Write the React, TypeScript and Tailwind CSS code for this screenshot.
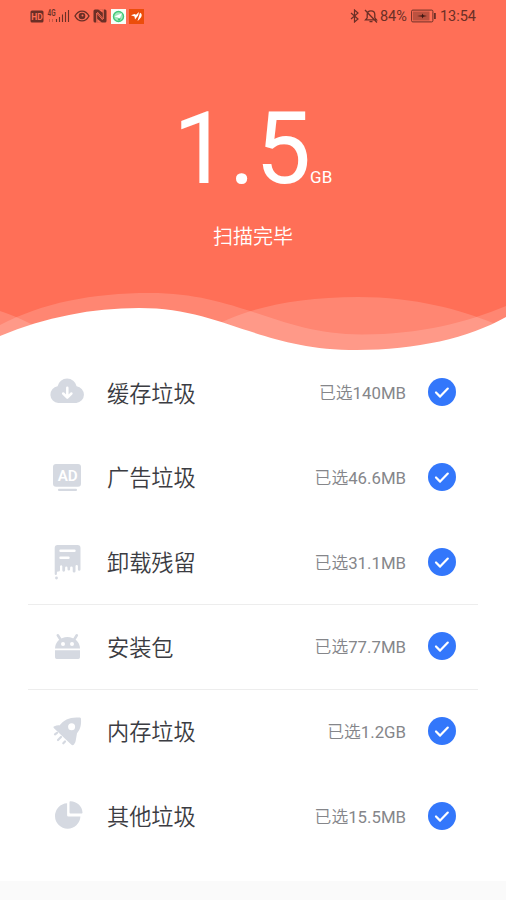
import type { ReactNode } from 'react';

type Row = { name: string; size: string; icon: ReactNode; divider?: boolean };

const CloudIcon = () => (
  <svg className="w-9 h-9" viewBox="0 0 36 36" aria-hidden="true">
    <path d="M9.500 29a8.400 8.400 0 0 1-.7-16.700A9.700 9.700 0 0 1 27.800 12.300 8.400 8.400 0 0 1 27.500 29z" fill="#d5d9e1" transform="translate(-.2 -1)" />
    <path d="M18.300 12.700v9.400M14.200 18.500l4.100 4.100 4.100-4.100" fill="none" stroke="#fff" strokeWidth="2.500" strokeLinecap="round" strokeLinejoin="round" />
  </svg>
);

const AdIcon = () => (
  <svg className="w-9 h-9" viewBox="0 0 36 36" aria-hidden="true">
    <rect x="4" y="4" width="28" height="22.800" rx="3" fill="#d5d9e1" />
    <rect x="9" y="28.700" width="19" height="2.300" rx="1" fill="#d5d9e1" />
    <text x="18.700" y="21" textAnchor="middle" fontSize="15" fontWeight="600" textLength="20" lengthAdjust="spacingAndGlyphs" fill="#fff" fontFamily="Roboto, sans-serif">AD</text>
  </svg>
);

const ResidueIcon = () => (
  <svg className="w-9 h-9" viewBox="0 0 36 36" aria-hidden="true">
    <path d="M8 1h20a3 3 0 0 1 3 3v21.500a1.300 1.300 0 0 1-2.600 0v-3.200a1.200 1.200 0 0 0-2.400 0v4.900a1.400 1.400 0 0 1-2.800 0v-3.500a1.300 1.300 0 0 0-2.600 0v1.600a1.300 1.300 0 0 1-2.600 0v-1.600a1.200 1.200 0 0 0-2.400 0v2.600a1.400 1.400 0 0 1-2.800 0v-4.100a1.200 1.200 0 0 0-2.300 0v3.900a1.500 1.500 0 0 1-1.500 1.500h-.6a1 1 0 0 0-1 1v1.300a1.100 1.100 0 0 1-2.200 0V4a3 3 0 0 1 2.800-3z" fill="#d5d9e1" transform="translate(.5 0)" />
    <circle cx="7.500" cy="34" r="1.400" fill="#d5d9e1" />
    <path d="M11.500 6.700h14M11.500 13.700h8" stroke="#fff" strokeWidth="2.400" strokeLinecap="round" />
  </svg>
);

const PackageIcon = () => (
  <svg className="w-9 h-9" viewBox="0 0 36 36" aria-hidden="true">
    <path d="M8.800 6.300l3.500 5.500M27.800 6.300L24.300 12" stroke="#d5d9e1" strokeWidth="2.600" strokeLinecap="round" />
    <path d="M6 19.500c0-6.500 5.500-11.500 12.400-11.500S31 13 31 19.500z" fill="#d5d9e1" />
    <path d="M6 21.300h25v7a1.700 1.700 0 0 1-1.700 1.700H7.700A1.700 1.700 0 0 1 6 28.300z" fill="#d5d9e1" />
    <circle cx="14" cy="15" r="2" fill="#fff" />
    <circle cx="23" cy="15" r="2" fill="#fff" />
  </svg>
);

const RocketIcon = () => (
  <svg className="w-9 h-9" viewBox="0 0 36 36" aria-hidden="true">
    <path d="M30.500 3.500c.8 0 1.500.6 1.500 1.400.3 5.500-.3 9.800-4 14.300l-1.300 7.600c-.2 1.200-.9 2.700-1.700 3.700-.9 1.100-2 1-2.800 0L5 14.200c-.9-.9-.6-1.600.4-2 1.700-.7 3.400-1 5-.8C15.400 5.500 20.500 2.800 30.500 3.500z" fill="#d5d9e1" />
    <circle cx="22.600" cy="12.800" r="3.500" fill="#fff" />
    <path d="M8 18.800l-2 1.600M12 23l-3 3M16 27.500l-1.700 1.800" stroke="#d5d9e1" strokeWidth="2.200" strokeLinecap="round" />
  </svg>
);

const PieIcon = () => (
  <svg className="w-9 h-9" viewBox="0 0 36 36" aria-hidden="true">
    <path d="M18.100 5.300v12a1.300 1.300 0 0 0 1.300 1.300h12A12.700 12.700 0 1 1 18.100 5.300z" fill="#d5d9e1" />
    <path d="M21.500 3.300c6.300 0 11.800 5 12 11.200 0 .7-.4 1.100-1 1.100H21.500a1 1 0 0 1-1-1V4.300c0-.6.400-1 1-1z" fill="#d5d9e1" />
  </svg>
);

const rows: Row[] = [
  { name: '缓存垃圾', size: '140MB', icon: <CloudIcon /> },
  { name: '广告垃圾', size: '46.6MB', icon: <AdIcon /> },
  { name: '卸载残留', size: '31.1MB', icon: <ResidueIcon />, divider: true },
  { name: '安装包', size: '77.7MB', icon: <PackageIcon />, divider: true },
  { name: '内存垃圾', size: '1.2GB', icon: <RocketIcon /> },
  { name: '其他垃圾', size: '15.5MB', icon: <PieIcon /> },
];

function StatusBar() {
  return (
    <div className="flex h-8 items-center justify-between px-[30px] text-[#6b2f26]">
      <div className="flex items-center">
        <svg width="14" height="13" viewBox="0 0 14 13" aria-hidden="true">
          <rect x=".5" y=".5" width="13" height="12" rx="1.500" fill="#6b2f26" />
          <text x="7" y="9.700" textAnchor="middle" fontSize="8.500" fontWeight="700" fill="#ff6f57" fontFamily="Roboto, sans-serif">HD</text>
        </svg>
        <svg className="ml-[3px]" width="24" height="15" viewBox="0 0 24 15" aria-hidden="true">
          <text x=".5" y="7" fontSize="8.500" fontWeight="600" textLength="8" lengthAdjust="spacingAndGlyphs" fill="#6b2f26" fontFamily="Roboto, sans-serif">4G</text>
          <path d="M2.500 10v3M5.500 10v3" stroke="#6b2f26" strokeWidth="1" opacity=".35" />
          <path d="M9.500 10v3M12.500 8v5M15.500 5.500V13M18.500 3v10M21.500 1v12" stroke="#6b2f26" strokeWidth="1.100" />
        </svg>
        <svg className="ml-[3px]" width="16" height="14" viewBox="0 0 16 14" aria-hidden="true">
          <path d="M1 7c3.500-6.500 10.500-6.500 14 0-3.500 6.500-10.500 6.500-14 0z" fill="none" stroke="#6b2f26" strokeWidth="1.400" />
          <circle cx="8" cy="7" r="3.300" fill="#6b2f26" />
          <circle cx="8.500" cy="6.500" r="1" fill="#ff6f57" />
        </svg>
        <svg className="ml-[3px]" width="14" height="14" viewBox="0 0 14 14" aria-hidden="true">
          <rect x=".5" y=".5" width="13" height="13" rx="1.500" fill="#6b2f26" />
          <path d="M3.700 14V4l6 7M10.300 0v10l-6-7" fill="none" stroke="#ff6f57" strokeWidth=".9" />
          <path d="M5 .3h4.800v3.500zM4.200 13.700H9l-4.800-4z" fill="#ff6f57" />
        </svg>
        <svg className="ml-1" width="15" height="15" viewBox="0 0 15 15" aria-hidden="true">
          <path d="M0 0h15v15H0z" fill="#f8fff9" />
          <circle cx="7.500" cy="7.500" r="5" fill="#a4e7bd" stroke="#43c878" strokeWidth="1.400" />
          <path d="M3.500 7.500l7.500-3.300-2.500 5.300-2-1.300z" fill="#fff" />
          <path d="M6.500 9.500L8 12l2-2.500z" fill="#36bd6a" />
        </svg>
        <svg className="ml-[3px]" width="15" height="15" viewBox="0 0 15 15" aria-hidden="true">
          <path d="M0 0h15v15H0z" fill="#ec4d0b" />
          <path d="M2 6.300l3.500-1.300 1.500.8L10 3l-.8 3.500L6 10.500l-.5-3z" fill="#fff" />
          <path d="M11 3.800c2.800 1.200 2.200 4.700-2.500 8.200l1-3.500z" fill="#fff" />
        </svg>
      </div>
      <div className="flex items-center text-[14.500px] leading-4">
        <svg width="10" height="14" viewBox="0 0 10 14" fill="none" stroke="#6b2f26" strokeWidth="1.200" aria-hidden="true">
          <path d="M1 4l7 6-3.500 3V1L8 4l-7 6" />
        </svg>
        <svg className="ml-1" width="14" height="14" viewBox="0 0 14 14" fill="none" stroke="#6b2f26" strokeWidth="1.300" aria-hidden="true">
          <path d="M1.500 10.800h11l-1.700-2V5.500c0-2.200-1.600-3.700-3.800-3.700S3.200 3.300 3.200 5.500v3.300zM5.500 12.700h3M1 1l12 12.500" />
        </svg>
        <span className="ml-[2px] pt-px">84%</span>
        <svg className="ml-1" width="26" height="14" viewBox="0 0 26 14" aria-hidden="true">
          <rect x=".6" y="1.100" width="21.300" height="11.800" rx="1.200" fill="none" stroke="#6b2f26" strokeWidth="1" />
          <path d="M2 2.500h16.500v9H2z" fill="#6b2f26" opacity=".45" />
          <path d="M6 7l5-.8V4.500l1.500 1.700L16 7l-3.500.8L11 9.500V7.800z" fill="#3d1712" />
          <path d="M23 4h1.800v6H23z" fill="#6b2f26" />
        </svg>
        <span className="ml-[3px] pt-px">13:54</span>
      </div>
    </div>
  );
}

function Waves() {
  return (
    <svg className="block w-full h-[71px]" viewBox="0 280 506 71" preserveAspectRatio="none" aria-hidden="true">
      <path d="M0 325C42 303 92 293 150 293c90 0 128 41.500 212 41.500 58 0 104-12 144-28.500v45H0z" fill="#fff" fillOpacity=".16" />
      <path d="M0 311c14 5 24 9 33 14 50 20 138 20 187-2 33-16 79-26 138-26 58 0 103 13 135 26l13 7v21H0z" fill="#fff" fillOpacity=".16" />
      <path d="M0 336c46-19 92-28 139-28 85 0 119 42 218 42 59 0 112-12 149-33v34H0z" fill="#fff" />
    </svg>
  );
}

function CheckBadge() {
  return (
    <svg className="ml-[22px] mb-px w-7 h-7 shrink-0" viewBox="0 0 28 28" aria-hidden="true">
      <circle cx="14" cy="14" r="14" fill="#3377fb" />
      <path d="M8 14.500l4.100 4.100 7.700-8" fill="none" stroke="#fff" strokeWidth="2.200" strokeLinecap="round" strokeLinejoin="round" />
    </svg>
  );
}

export default function App() {
  return (
    <div className="flex h-[900px] w-[506px] flex-col overflow-hidden bg-white font-['Roboto','Noto_Sans_CJK_SC',sans-serif]">
      {/* Header */}
      <header className="bg-[#ff6f57] text-white">
        <StatusBar />
        <div className="h-[248px] pt-[67px]">
          <div className="flex h-[123px] items-baseline pl-[173px] leading-[100px]">
            <span className="text-[99.500px]">1.5</span>
            <span className="-ml-px text-[17px]">GB</span>
          </div>
          <p className="text-center text-[20px] font-[350] leading-[30px]">扫描完毕</p>
        </div>
        <Waves />
      </header>

      {/* Junk list */}
      <ul className="h-[530px] px-7">
        {rows.map(row => (
          <li key={row.name} className={`flex h-[84.700px] items-center pl-[21px] pr-[22px] border-b ${row.divider ? 'border-[#ededed]' : 'border-transparent'}`}>
            {row.icon}
            <span className="ml-[22px] pt-[3px] text-[22.200px] font-[350] text-[#3b3c42]">{row.name}</span>
            <span className="ml-auto pt-[2px] text-[16.800px] text-[#85868a]">
              <span className="font-[350]">已选</span>{row.size}
            </span>
            <CheckBadge />
          </li>
        ))}
      </ul>

      <div className="flex-1 bg-[#fafafa]" />
    </div>
  );
}
